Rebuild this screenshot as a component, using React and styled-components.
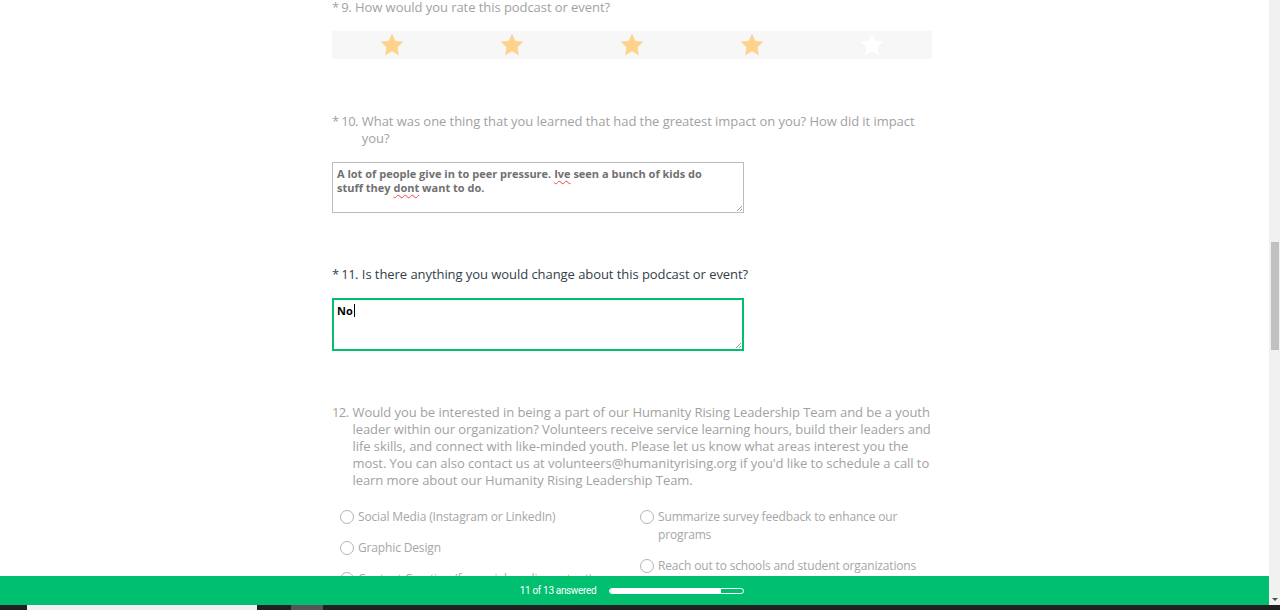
import React from "react";
import styled, { createGlobalStyle } from "styled-components";

const GlobalStyle = createGlobalStyle`
  html, body { margin: 0; padding: 0; overflow: hidden; background: #ffffff; }
  body { font-family: "Open Sans", "Noto Sans", sans-serif; }
  * { box-sizing: border-box; }
`;

const Screen = styled.div`
  display: flex;
  flex-direction: column;
  width: 1280px;
  height: 610px;
`;

const Window = styled.div`
  display: flex;
  flex: 1;
  min-height: 0;
`;

const Viewport = styled.div`
  display: flex;
  flex-direction: column;
  flex: 1;
  min-width: 0;
`;

const Scroller = styled.main`
  flex: 1;
  min-height: 0;
  overflow: hidden;
  padding-left: 332px;
`;

const Survey = styled.div`
  width: 600px;
  margin-top: -1px;
  display: flex;
  flex-direction: column;
  gap: 53px;
`;

const Question = styled.section`
  display: flex;
  flex-direction: column;
  gap: ${(p) => p.$gap || 15}px;
`;

const Title = styled.div`
  display: flex;
  gap: 4px;
  width: 604px;
  font-size: 13px;
  line-height: 17px;
  letter-spacing: -0.06px;
  color: ${(p) => (p.$active ? "#333e48" : "#a2a2a2")};
`;

const Num = styled.span`
  flex: none;
  letter-spacing: -0.6px;
`;

const Text = styled.span`
  flex: 1;
  min-width: 0;
`;

const StarBar = styled.div`
  display: grid;
  grid-template-columns: repeat(5, 1fr);
  height: 28px;
  margin-bottom: 1px;
  background: #f7f7f7;
`;

const StarCell = styled.div`
  display: flex;
  align-items: center;
  justify-content: center;
`;

const TextBox = styled.div`
  position: relative;
  width: 412px;
  height: ${(p) => (p.$active ? 53 : 51)}px;
  border: ${(p) => (p.$active ? "2px solid #00bf6f" : "1px solid #bcbcbc")};
  padding: ${(p) => (p.$active ? "4px 20px 4px 3px" : "4px 20px 4px 4px")};
  font-size: 11px;
  font-weight: 700;
  line-height: 14px;
  color: ${(p) => (p.$active ? "#000000" : "#707070")};
  background: #ffffff;
`;

const Misspelt = styled.span`
  text-decoration: underline wavy #e44;
  text-decoration-thickness: 1px;
  text-underline-offset: 2px;
`;

const Caret = styled.span`
  display: inline-block;
  width: 1px;
  height: 13px;
  margin-left: 1px;
  background: #000;
  vertical-align: -2px;
`;

const Grip = styled.svg`
  position: absolute;
  right: 0;
  bottom: 0;
`;

const Options = styled.div`
  display: grid;
  grid-template-columns: 300px 1fr;
  padding-left: 8px;
`;

const OptionColumn = styled.div`
  display: flex;
  flex-direction: column;
  gap: 13px;
`;

const Option = styled.label`
  display: flex;
  align-items: flex-start;
  gap: 4px;
  font-size: 12px;
  line-height: 18px;
  letter-spacing: -0.15px;
  color: #a6a6a6;
`;

const Radio = styled.span`
  flex: none;
  width: 14px;
  height: 14px;
  margin-top: 2px;
  border: 1px solid #b4b4b4;
  border-radius: 50%;
`;

const Footer = styled.footer`
  flex: none;
  height: 29px;
  background: #00bf6f;
  display: flex;
  align-items: center;
  justify-content: center;
  gap: 13px;
  padding-right: 5px;
`;

const Progress = styled.span`
  font-family: Roboto, "Liberation Sans", sans-serif;
  font-size: 10px;
  letter-spacing: -0.35px;
  color: #ffffff;
`;

const Track = styled.div`
  width: 135px;
  height: 6px;
  border: 1px solid #ffffff;
  border-radius: 3px;
  overflow: hidden;
`;

const Fill = styled.div`
  height: 100%;
  background: #ffffff;
`;

const Scrollbar = styled.div`
  flex: none;
  width: 11px;
  background: #f1f1f1;
  display: flex;
  flex-direction: column;
  align-items: center;
`;

const Thumb = styled.div`
  width: 8px;
  height: 108px;
  margin-top: 242px;
  margin-left: 1px;
  background: #c1c1c1;
`;

const Spacer = styled.div`
  flex: 1;
`;

const ArrowDown = styled.div`
  width: 0;
  height: 0;
  margin-bottom: 4px;
  border-left: 3px solid transparent;
  border-right: 3px solid transparent;
  border-top: 3px solid #505050;
`;

const Taskbar = styled.div`
  flex: none;
  height: 5px;
  background: #202020;
  display: flex;
  padding-left: 27px;
  gap: 34px;
`;

const TaskItem = styled.div`
  width: ${(p) => p.$w}px;
  background: ${(p) => p.$c};
`;

function Star({ color }) {
  return (
    <svg width="26" height="26" viewBox="0 0 24 24">
      <path
        d="M12 1.6l3.1 6.7 7.3.8-5.4 5 1.5 7.3L12 17.7l-6.5 3.7 1.5-7.3-5.4-5 7.3-.8z"
        fill={color}
      />
    </svg>
  );
}

function ResizeGrip() {
  return (
    <Grip width="8" height="8" viewBox="0 0 8 8">
      <path d="M7 2L2 7M7 5L5 7" stroke="#9a9a9a" strokeWidth="1" />
    </Grip>
  );
}

const leftOptions = [
  "Social Media (Instagram or LinkedIn)",
  "Graphic Design",
  "Content Creation (for social media content)",
];
const rightOptions = [
  "Summarize survey feedback to enhance our programs",
  "Reach out to schools and student organizations",
  "Event Planning",
];

export default function App() {
  const answered = 11;
  const total = 13;
  return (
    <>
      <GlobalStyle />
      <Screen>
        <Window>
          <Viewport>
            <Scroller>
              <Survey>
                <Question>
                  <Title>
                    <Num>* 9.</Num>
                    <Text>How would you rate this podcast or event?</Text>
                  </Title>
                  <StarBar>
                    {[1, 2, 3, 4, 5].map((n) => (
                      <StarCell key={n}>
                        <Star color={n <= 4 ? "#fdd38b" : "#ffffff"} />
                      </StarCell>
                    ))}
                  </StarBar>
                </Question>

                <Question>
                  <Title>
                    <Num>* 10.</Num>
                    <Text>
                      What was one thing that you learned that had the greatest impact on you? How did it impact you?
                    </Text>
                  </Title>
                  <TextBox>
                    A lot of people give in to peer pressure. <Misspelt>Ive</Misspelt> seen a bunch of kids do
                    stuff they <Misspelt>dont</Misspelt> want to do.
                    <ResizeGrip />
                  </TextBox>
                </Question>

                <Question>
                  <Title $active>
                    <Num>* 11.</Num>
                    <Text>Is there anything you would change about this podcast or event?</Text>
                  </Title>
                  <TextBox $active>
                    No<Caret />
                    <ResizeGrip />
                  </TextBox>
                </Question>

                <Question $gap={19}>
                  <Title>
                    <Num>12.</Num>
                    <Text>
                      Would you be interested in being a part of our Humanity Rising Leadership Team and be a youth
                      leader within our organization? Volunteers receive service learning hours, build their leaders
                      and life skills, and connect with like-minded youth. Please let us know what areas interest you
                      the most. You can also contact us at volunteers@humanityrising.org if you'd like to schedule a
                      call to learn more about our Humanity Rising Leadership Team.
                    </Text>
                  </Title>
                  <Options>
                    <OptionColumn>
                      {leftOptions.map((o) => (
                        <Option key={o}>
                          <Radio />
                          <span>{o}</span>
                        </Option>
                      ))}
                    </OptionColumn>
                    <OptionColumn>
                      {rightOptions.map((o) => (
                        <Option key={o}>
                          <Radio />
                          <span>{o}</span>
                        </Option>
                      ))}
                    </OptionColumn>
                  </Options>
                </Question>
              </Survey>
            </Scroller>
            <Footer>
              <Progress>
                {answered} of {total} answered
              </Progress>
              <Track>
                <Fill style={{ width: `${(answered / total) * 100 - 1}%` }} />
              </Track>
            </Footer>
          </Viewport>
          <Scrollbar>
            <Thumb />
            <Spacer />
            <ArrowDown />
          </Scrollbar>
        </Window>
        <Taskbar>
          <TaskItem $w={230} $c="#f0f0f0" />
          <TaskItem $w={32} $c="#555555" />
        </Taskbar>
      </Screen>
    </>
  );
}
